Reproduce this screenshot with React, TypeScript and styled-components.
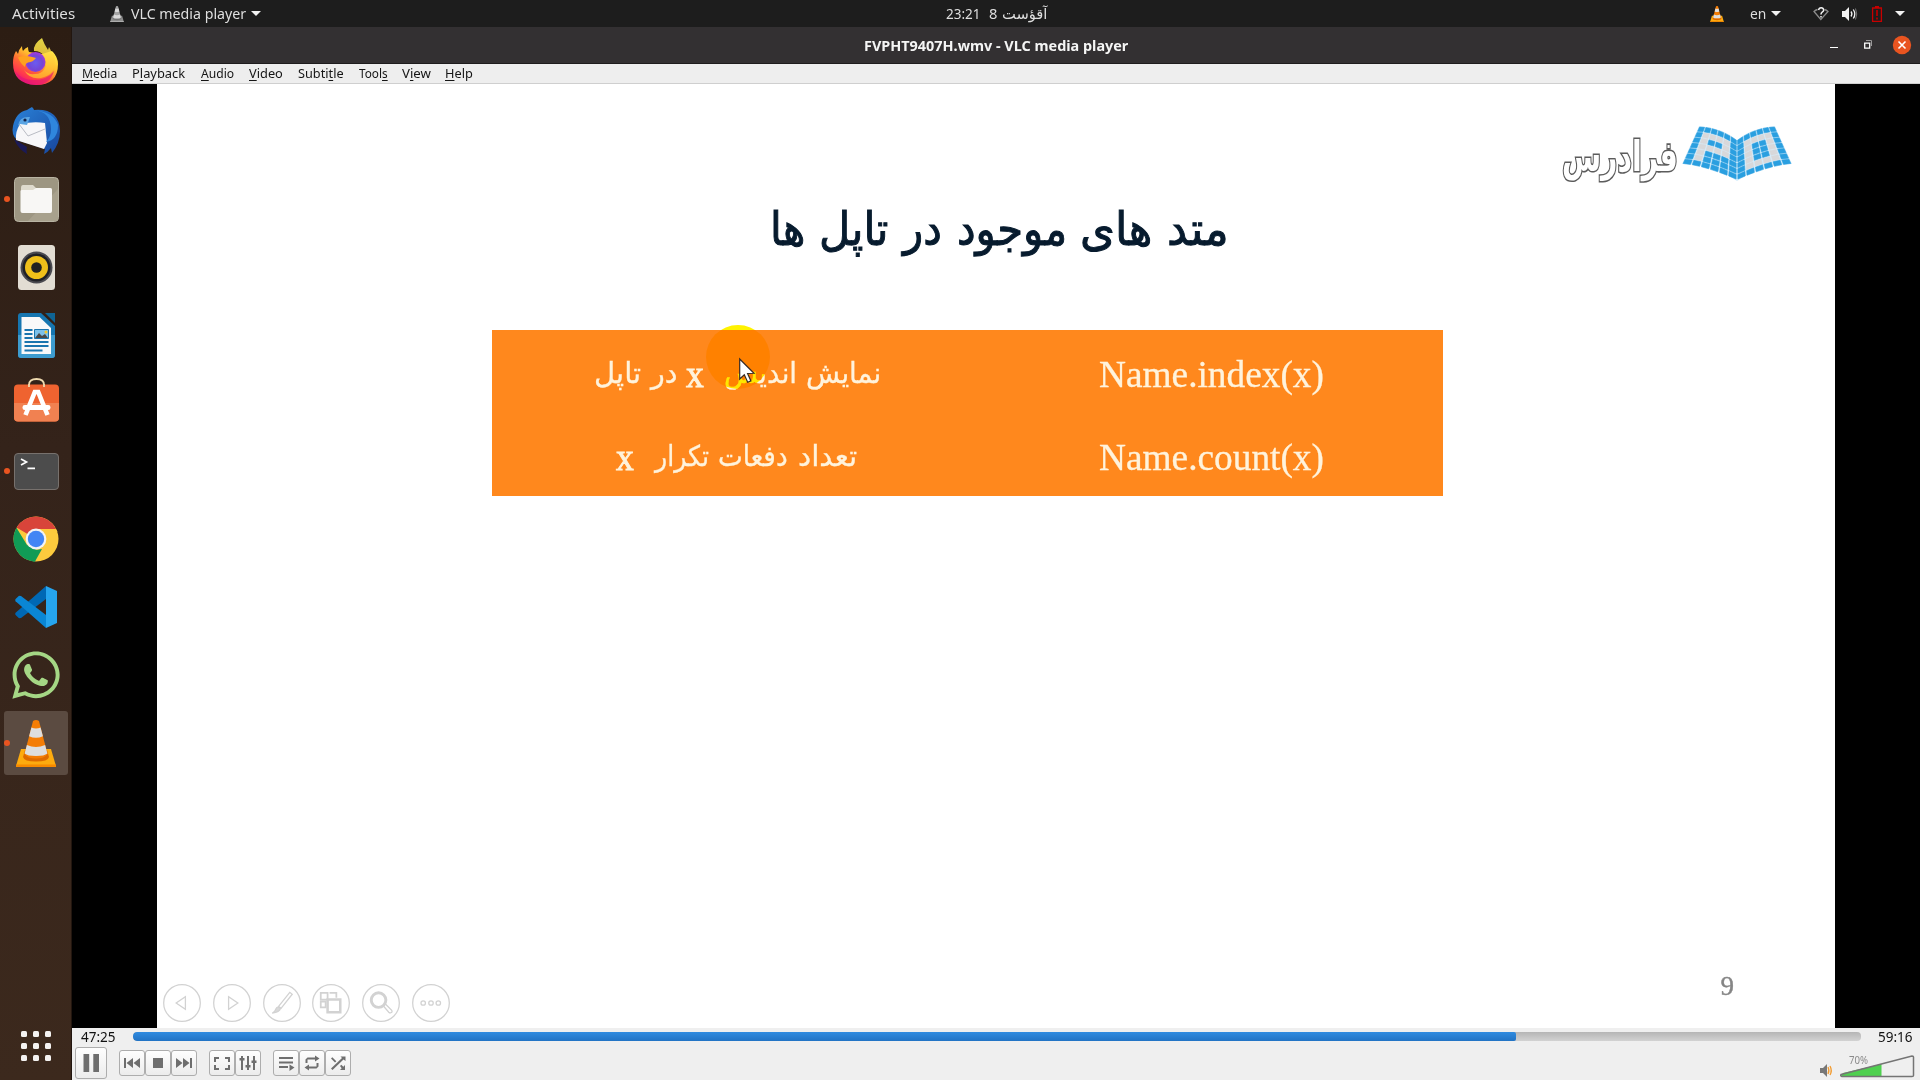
import React, { useLayoutEffect, useRef, useState } from 'react';
import styled, { createGlobalStyle } from 'styled-components';
import { FaWhatsapp } from 'react-icons/fa';

const UI = '"Noto Sans", "Open Sans", "DejaVu Sans", sans-serif';
const SERIF = '"Liberation Serif", "DejaVu Serif", serif';
const ARABIC = '"DejaVu Sans", sans-serif';

const Global = createGlobalStyle`
  html, body { margin: 0; padding: 0; background: #000; overflow: hidden; }
  * { box-sizing: border-box; }
  svg { display: block; flex: none; overflow: visible; }
`;

/* ---------- text that is condensed or widened to a set width ---------- */
const FitBox = styled.span<{ $w: number; $ml: number }>`
  display: block;
  flex: none;
  width: ${p => p.$w}px;
  margin-left: ${p => p.$ml}px;
  white-space: nowrap;
  direction: ltr;
`;
const FitInner = styled.span`
  display: inline-block;
  transform-origin: 0 50%;
`;
function Fit({ w, ml = 0, children }: { w: number; ml?: number; children: React.ReactNode }) {
  const ref = useRef<HTMLSpanElement>(null);
  const [scale, setScale] = useState(1);
  useLayoutEffect(() => {
    if (ref.current && ref.current.offsetWidth) setScale(w / ref.current.offsetWidth);
  }, [w]);
  return (
    <FitBox $w={w} $ml={ml}>
      <FitInner ref={ref} style={{ transform: `scaleX(${scale})` }}>{children}</FitInner>
    </FitBox>
  );
}

/* ---------- shell ---------- */
const Desktop = styled.div`
  width: 1920px;
  height: 1080px;
  display: flex;
  flex-direction: column;
  overflow: hidden;
  font-family: ${UI};
`;
const TopBar = styled.header`
  height: 27px;
  flex: none;
  display: grid;
  grid-template-columns: 1fr auto 1fr;
  align-items: center;
  background: #1d1d1d;
  color: #dfdfdf;
  font-size: 14.7px;
  line-height: 27px;
`;
const BarLeft = styled.div`
  display: flex;
  align-items: center;
  padding-left: 12px;
`;
const Clock = styled.div`
  display: flex;
  align-items: center;
  width: 101px;
  margin-right: -73px;
`;
const BarRight = styled.div`
  display: flex;
  align-items: center;
  justify-content: flex-end;
  padding-right: 15px;
`;
const Caret = styled.i<{ $ml: number }>`
  width: 0;
  height: 0;
  margin-left: ${p => p.$ml}px;
  border: 5px solid transparent;
  border-top-color: #f2f2f2;
  border-bottom: 0;
`;
const Gap = styled.span<{ $w: number }>`
  flex: none;
  width: ${p => p.$w}px;
`;
const Below = styled.div`
  flex: 1;
  display: flex;
  min-height: 0;
`;

/* ---------- dock ---------- */
const Dock = styled.nav`
  width: 72px;
  flex: none;
  display: flex;
  flex-direction: column;
  padding: 4px 4px 15px;
  gap: 4px;
  background: linear-gradient(#2c1d13, #34231a 40%, #3c291d);
  border-right: 1px solid #22160f;
`;
const Slot = styled.div<{ $active?: boolean; $lift?: number }>`
  height: 64px;
  flex: none;
  display: grid;
  place-items: center;
  position: relative;
  padding-bottom: ${p => p.$lift ?? 0}px;
  border-radius: 3px;
  margin-right: -1px;
  background: ${p => (p.$active ? '#5b4b41' : 'transparent')};
`;
const RunDot = styled.i`
  position: absolute;
  left: 0;
  top: 29px;
  width: 6px;
  height: 6px;
  border-radius: 50%;
  background: #e95420;
`;
const AppsGrid = styled.div`
  margin: auto 0 0 17px;
  display: grid;
  grid-template-columns: repeat(3, 6px);
  grid-auto-rows: 6px;
  gap: 6px;
  padding-bottom: 4px;
`;
const AppsCell = styled.i`
  background: #f4f2f1;
  border-radius: 1.5px;
`;

/* ---------- window ---------- */
const Win = styled.main`
  flex: 1;
  display: flex;
  flex-direction: column;
  min-width: 0;
`;
const TitleBar = styled.div`
  height: 37px;
  flex: none;
  display: grid;
  grid-template-columns: 1fr auto 1fr;
  align-items: center;
  background: #333032;
  border-bottom: 1px solid #1e1c1d;
  color: #f5f5f5;
  font: bold 14.7px/36px ${UI};
`;
const WinButtons = styled.div`
  display: flex;
  align-items: center;
  justify-content: flex-end;
  padding-right: 9px;
`;
const MenuBar = styled.div`
  height: 20px;
  flex: none;
  display: flex;
  padding-left: 10px;
  background: #eee;
  border-bottom: 1px solid #cfcfcf;
  color: #151515;
  font-size: 13px;
  line-height: 19px;
`;
const U = styled.u`
  text-underline-offset: 2px;
  text-decoration-thickness: 1px;
  text-decoration-skip-ink: none;
`;
const Video = styled.div`
  height: 944px;
  flex: none;
  display: flex;
  background: #000;
  padding: 0 85px;
`;
const Slide = styled.div`
  flex: 1;
  position: relative;
  display: flex;
  flex-direction: column;
  background: #fff;
`;
const LogoRow = styled.div`
  display: flex;
  padding: 42px 43px 0 0;
  justify-content: flex-end;
  height: 108px;
`;
const LogoText = styled.div`
  margin: 5px 4px 0 0;
  font: bold 42px/52px ${ARABIC};
  color: #fff;
  -webkit-text-stroke: 3.2px #5c5c5c;
  paint-order: stroke fill;
`;
const Heading = styled.h1`
  margin: 0 0 0 613px;
  height: 138px;
  display: flex;
  font: normal 46px/74px ${ARABIC};
  color: #071b2e;
  -webkit-text-stroke: 1px #071b2e;
`;
const Table = styled.div`
  width: 951px;
  height: 166px;
  margin-left: 335px;
  display: grid;
  grid-template-rows: 83px 83px;
  background: #ff881d;
  color: #fff3dc;
`;
const Row = styled.div<{ $pad: number }>`
  display: flex;
  align-items: flex-start;
  padding-left: ${p => p.$pad}px;
`;
const Fa = styled.div`
  display: flex;
  font: 28.5px/70px ${ARABIC};
  height: 70px;
  margin-top: 9px;
  -webkit-text-stroke: 0.3px #fff3dc;
`;
const Latin = styled.div<{ $heavy?: boolean }>`
  font: 37.5px/70px ${SERIF};
  margin-top: 10px;
  -webkit-text-stroke: ${p => (p.$heavy ? 0.9 : 0.3)}px #fff3dc;
`;
const PageNo = styled.div`
  margin: auto 101px -20px auto;
  font: 27px/36px ${SERIF};
  color: #858585;
  -webkit-text-stroke: 0.4px #858585;
`;
const Halo = styled.div`
  position: absolute;
  left: 549px;
  top: 241px;
  width: 64px;
  height: 64px;
  border-radius: 50%;
  background: #fff200;
  mix-blend-mode: multiply;
  filter: blur(0.7px);
`;
const Pointer = styled.div`
  position: absolute;
  left: 582px;
  top: 274px;
`;
const SlideTools = styled.div`
  display: flex;
  gap: 11.8px;
  padding: 0 0 6px 6px;
`;

/* ---------- player controls ---------- */
const Controls = styled.footer`
  flex: 1;
  background: #efefef;
  color: #111;
  font-size: 13.5px;
`;
const SeekRow = styled.div`
  height: 18px;
  display: flex;
  align-items: center;
  padding-left: 9px;
  line-height: 18px;
`;
const Seek = styled.div`
  width: 1728px;
  height: 9px;
  margin: -1px 17px 0 17px;
  border-radius: 4px;
  background: linear-gradient(#b5b5b5, #d2d2d2);
  overflow: hidden;
`;
const SeekFill = styled.div`
  height: 100%;
  background: linear-gradient(#2f8be0, #2273c4);
  border-radius: 4px 2px 2px 4px;
`;
const ButtonRow = styled.div`
  display: flex;
  height: 34px;
  align-items: center;
  padding-left: 3px;
`;
const Group = styled.div`
  display: flex;
  margin-left: 12px;
`;
const Btn = styled.button<{ $size?: number }>`
  width: ${p => p.$size ?? 26}px;
  height: ${p => p.$size ?? 26}px;
  padding: 0;
  display: grid;
  place-items: center;
  border: 1px solid #adadad;
  border-radius: 3px;
  background: linear-gradient(#fefefe, #ececec);
`;
const Volume = styled.div`
  margin-left: auto;
  display: flex;
  padding-right: 5px;
`;

/* ---------- drawings ---------- */
const Cone = ({ w, h, gray }: { w: number; h: number; gray?: boolean }) => {
  const o = gray ? '#a4a4a4' : '#f47d05';
  const l = gray ? '#d9d9d9' : '#dedede';
  return (
    <svg width={w} height={h} viewBox="0 0 40 47">
      <path d="M5 29h30l5 17H0z" fill={gray ? '#8d8d8d' : '#fdab0f'} />
      <path d="M0 44.500h40v2.500H0z" fill={gray ? '#b8b8b8' : '#f78a00'} />
      <path d="M9 30L7 37q1 4.500 13 4.500T33 37l-2-7z" fill={gray ? '#777' : '#dd6a00'} />
      <path d="M17 1q3-2 6 0l8.500 33q-3 4.500-11.500 4.500T8.500 34z" fill={o} />
      <path d="M15.400 7.500q4.600 2 9.200 0l2.300 8.700q-6.900 3.300-13.800 0z" fill={l} />
      <path d="M10.900 25q9.100 4 18.200 0l2.300 8.500q-3 2.500-11.400 2.500T8.600 33.500z" fill={l} />
    </svg>
  );
};

const Firefox = () => (
  <svg width="46" height="47" viewBox="0 0 46 47">
    <defs>
      <linearGradient id="ffa" x1=".85" y1=".1" x2=".25" y2=".95">
        <stop offset="0" stopColor="#fff04a" /><stop offset=".35" stopColor="#ffbd2e" />
        <stop offset=".6" stopColor="#ff6a33" /><stop offset=".85" stopColor="#ff3550" /><stop offset="1" stopColor="#e2157c" />
      </linearGradient>
      <radialGradient id="ffb" cx=".5" cy=".55" r=".6">
        <stop offset="0" stopColor="#6a5cf0" /><stop offset=".6" stopColor="#7446d6" /><stop offset="1" stopColor="#b833e1" />
      </radialGradient>
      <linearGradient id="ffc" x1="0" y1="0" x2="0" y2="1">
        <stop offset="0" stopColor="#fff44f" /><stop offset="1" stopColor="#ffb02c" />
      </linearGradient>
    </defs>
    <path d="M9 8q0 3 1 5 2-3 5-4 0 3 1 5l13 2 10-3q6 6 6 13 0 21-22 21Q0 46 0 25q0-7 3-12 1 1 2 3 1-5 4-8z" fill="url(#ffa)" />
    <path d="M2 33q6 9 19 9t20-9q-4 14-18 14T2 33z" fill="#e5127a" opacity=".65" />
    <circle cx="22.500" cy="24" r="10" fill="url(#ffb)" />
    <path d="M29 0q-9 6-8 13 7 0 10 5 4 6 1 12-3 6-10 6-7 1-11-4 6 10 17 8 14-3 14-17 0-5-2-9l-1 2q-1-4-3-7l-1 3Q31 6 29 0z" fill="url(#ffc)" opacity=".85" />
    <path d="M5 19.500q3-2 9-1.500 6 1 9 2-3 4-8 4.500-3 1-3 4.500-5-4-7-9.500z" fill="#ffa21f" />
  </svg>
);

const Thunderbird = () => (
  <svg width="48" height="48" viewBox="0 0 48 48">
    <defs>
      <linearGradient id="tba" x1="0" y1="0" x2="1" y2="1">
        <stop offset="0" stopColor="#2a82d8" /><stop offset="1" stopColor="#17459c" />
      </linearGradient>
    </defs>
    <path d="M20 0q2 2 2 3Q47 1 48 24q0 12-8 22l-1-5q-3 4-7 6l1-5L5 33Q-1 28 1 19 4 5 15 3q3-2 5-3z" fill="url(#tba)" />
    <path d="M2 32q4 10 13 15-1-4 0-7z" fill="#1b1a56" />
    <path d="M8 17q14-3 25-1l2 20-3 6-28-9q-1-8 4-16z" fill="#f7f7f9" />
    <path d="M7 17l9 12 17-7" fill="none" stroke="#b9bcc4" strokeWidth="1" />
    <path d="M6 19Q7 9 18 10l-3 8-7-1z" fill="#5aa5e4" />
    <path d="M22 3q17 2 17 19 0 8-5 13 12-2 12-17Q42 5 22 3z" fill="#2f86dd" />
    <circle cx="13" cy="13" r="1.600" fill="#12234b" />
  </svg>
);

const Files = () => (
  <svg width="45" height="45" viewBox="0 0 45 45">
    <rect x=".5" y=".5" width="44" height="44" rx="4" fill="#9d9682" stroke="#b9b4a3" />
    <path d="M44 12v29q0 3-3 3H14z" fill="#a8a18d" />
    <path d="M7 11q0-3 2-3h10l3 3h14q2 0 2 2v8H7z" fill="#dedacd" />
    <path d="M6.500 14q0-1 1.500-1h11l3-2h14q2 0 2 2v21q0 2-2 2H8.500q-2 0-2-2z" fill="#f8f7f5" />
  </svg>
);

const Rhythmbox = () => (
  <svg width="37" height="45" viewBox="0 0 37 45">
    <rect width="37" height="45" rx="3.500" fill="#e2ddd3" />
    <circle cx="18.500" cy="22.500" r="16" fill="#4a4a50" />
    <circle cx="18.500" cy="22.500" r="14" fill="#202126" />
    <circle cx="18.500" cy="22.500" r="11.500" fill="#efbf1a" />
    <circle cx="18.500" cy="22.500" r="5.300" fill="#222" />
  </svg>
);

const Writer = () => (
  <svg width="37" height="45" viewBox="0 0 37 45">
    <path d="M3 0h20l14 13v29q0 3-3 3H3q-3 0-3-3V3q0-3 3-3z" fill="#1676b0" />
    <path d="M0 22h37v20q0 3-3 3H3q-3 0-3-3z" fill="#3d9ccf" />
    <path d="M3.500 4h18L33 15v26H3.500z" fill="#f9f9f9" />
    <path d="M27 0h10v10z" fill="#0f6494" />
    <path d="M6.500 17h8M6.500 21h8M6.500 25h8M6.500 29h24M6.500 33h24M6.500 37.500h18" stroke="#1a75ae" strokeWidth="2" />
    <path d="M16.500 16.500h14v9h-14z" fill="#7cc1ea" stroke="#1a75ae" />
    <path d="M17 25l4-5 3 3 3-2 3 4z" fill="#484848" />
    <circle cx="28" cy="19" r="1.500" fill="#f5c629" />
  </svg>
);

const Software = () => (
  <svg width="45" height="45" viewBox="0 0 45 45">
    <path d="M15 10V7q0-6 7.500-6T30 7v3" fill="none" stroke="#eed9ae" strokeWidth="1.800" />
    <rect y="6.500" width="45" height="37" rx="4" fill="#ef6330" />
    <path d="M0 25h45v14.500q0 4-4 4H4q-4 0-4-4z" fill="#f18151" />
    <path d="M15 9V6M30 9V6" stroke="#eed9ae" strokeWidth="1.800" />
    <path d="M11.500 37L20.800 14h3.400l9.300 23" fill="none" stroke="#fff" strokeWidth="4.600" />
    <rect x="8.500" y="27" width="28" height="5" rx="2.300" fill="#fff" />
  </svg>
);

const Terminal = () => (
  <svg width="45" height="37" viewBox="0 0 45 37">
    <rect x=".5" y=".5" width="44" height="36" rx="3.500" fill="#4c4c4c" stroke="#77716d" />
    <path d="M7 6l5.500 3L7 12M13.500 15.300H21" fill="none" stroke="#fff" strokeWidth="1.700" />
  </svg>
);

const Chrome = () => (
  <svg width="46" height="46" viewBox="0 0 46 46">
    <circle cx="23" cy="23" r="22.500" fill="#fdca3d" />
    <path d="M23 23L3.500 11.500A22.500 22.500 0 0 1 43 13H23z" fill="#d8443a" />
    <path d="M3.500 11.800L14 29l10 5-2 11.500A22.500 22.500 0 0 1 3.500 11.800z" fill="#109b56" />
    <path d="M23 34l6-1-7 12.500h-2z" fill="#109b56" />
    <path d="M23 13h20a22 22 0 0 1 1.500 3L28 16z" fill="#fdca3d" />
    <circle cx="23" cy="23" r="10.400" fill="#f3f3f3" />
    <circle cx="23" cy="23" r="8.200" fill="#4285f4" />
  </svg>
);

const Code = () => (
  <svg width="42" height="42" viewBox="0 0 42 42">
    <path d="M31 0v13L6 32l-2 .3L.6 29q-1-1 0-2.200z" fill="#0068b4" />
    <path d="M31 42V29L6 10l-2-.3L.6 13q-1 1 0 2.200z" fill="#0a86d4" />
    <path d="M31 0l11 5v32l-11 5z" fill="#26a5ee" />
  </svg>
);

const gridRows = {
  left: ['BBBBBB', 'BGGGGB', 'BGBBGB', 'BGGGGB', 'BGBBBB', 'BGBBBB', 'BBBBBB'],
  right: ['BBBBBB', 'BGGGGB', 'BGBBGB', 'BGBBGB', 'BGBBGB', 'BGGGGB', 'BBBBBB'],
};
function Book() {
  const at = (u: number, v: number, right: boolean): [number, number] => {
    const topX = 17 + 37.5 * u, topY = 0.5 + 13.5 * u * u;
    const botX = 54.5 * u, botY = 38 + 16 * Math.pow(u, 1.5);
    const x = topX + (botX - topX) * v, y = topY + (botY - topY) * v;
    return [right ? 109 - x : x, y];
  };
  const cells: React.ReactNode[] = [];
  (['left', 'right'] as const).forEach(side => {
    const right = side === 'right';
    gridRows[side].forEach((line, r) =>
      line.split('').forEach((c, k) => {
        const col = right ? 5 - k : k;
        const u0 = (col + 0.1) / 6, u1 = (col + 0.9) / 6, v0 = (r + 0.1) / 7, v1 = (r + 0.9) / 7;
        const pts = [at(u0, v0, right), at(u1, v0, right), at(u1, v1, right), at(u0, v1, right)];
        const color = c === 'B' ? '#2a9fe0' : '#d8d8da';
        cells.push(<polygon key={side + r + k} points={pts.map(p => p.join(',')).join(' ')} fill={color} stroke={color} strokeWidth=".6" strokeLinejoin="round" />);
      }),
    );
  });
  return (
    <svg width="110" height="55" viewBox="0 0 109 55" preserveAspectRatio="none">
      <path d="M17 0Q40 2 54.500 14 69 2 92 0L109 38Q80 38 54.500 55 29 38 0 38z" fill="#c4e6f9" opacity=".7" />
      {cells}
    </svg>
  );
}

const toolGlyphs: React.ReactNode[] = [
  <path d="M23 13v13l-9.500-6.500z" />,
  <path d="M16 13v13l9.500-6.500z" />,
  <g><path d="M16 23L27.500 8.500l2.500 2L18.500 25z" /><path d="M16 23.500l2 1.500q-1 4-8.500 5 3-2 3.500-4 1-2.500 3-2.500z" fill="#d9d9d9" /></g>,
  <g strokeWidth="1.800"><path d="M9 9h7v7H9zM18 9h7v5M9 18h5v6H9z" /><path d="M16 16h13v13H16z" strokeWidth="2.600" /></g>,
  <g><circle cx="17" cy="16.500" r="7.500" strokeWidth="3" /><path d="M21.500 22l2-2 7 7q1 2-1 2.500-1 .5-2-.5z" /></g>,
  <g><circle cx="11.500" cy="19.500" r="2.300" /><circle cx="19.500" cy="19.500" r="2.300" /><circle cx="27" cy="19.500" r="2.300" /></g>,
];

const I = ({ children, s = 18 }: { children: React.ReactNode; s?: number }) => (
  <svg width={s} height={s} viewBox="0 0 18 18" fill="#6e6e6e">{children}</svg>
);

const dock: { icon: React.ReactNode; run?: boolean; active?: boolean; lift?: number }[] = [
  { icon: <Firefox />, lift: 3 },
  { icon: <Thunderbird /> },
  { icon: <Files />, run: true },
  { icon: <Rhythmbox /> },
  { icon: <Writer /> },
  { icon: <Software />, lift: 5 },
  { icon: <Terminal />, run: true },
  { icon: <Chrome /> },
  { icon: <Code /> },
  { icon: <FaWhatsapp size={54} color="#a5d785" /> },
  { icon: <Cone w={40} h={47} />, run: true, active: true },
];

const menus: [number, number, React.ReactNode][] = [
  [35.5, 0, <><U>M</U>edia</>],
  [53.5, 14.5, <>P<U>l</U>ayback</>],
  [33.5, 15, <><U>A</U>udio</>],
  [33.5, 15, <><U>V</U>ideo</>],
  [46, 15, <>Subti<U>t</U>le</>],
  [29, 15, <>Tool<U>s</U></>],
  [28.5, 14.5, <>V<U>i</U>ew</>],
  [27.5, 14.5, <><U>H</U>elp</>],
];

export default function App() {
  return (
    <Desktop>
      <Global />
      <TopBar>
        <BarLeft>
          <Fit w={63}>Activities</Fit>
          <Gap $w={35} />
          <Cone w={14} h={16} gray />
          <Fit w={115} ml={7}>VLC media player</Fit>
          <Caret $ml={5} />
        </BarLeft>
        <Clock>
          <Fit w={35}>23:21</Fit>
          <Fit w={8} ml={8}>8</Fit>
          <Fit w={45} ml={5}>آقؤست</Fit>
        </Clock>
        <BarRight>
          <Cone w={14} h={16} />
          <Fit w={16} ml={26}>en</Fit>
          <Caret $ml={5} />
          <Gap $w={32} />
          <svg width="16" height="14" viewBox="0 0 16 14">
            <path d="M4.500 2.500Q2.500 3 1 4.500l6.800 8L15 4.500Q13.500 3 11.500 2.500" fill="none" stroke="#8c8c8c" strokeWidth="1.300" />
            <path d="M5.500 3q.5-2.300 2.700-2.300T10.700 3q0 1.300-1.500 2.200Q8 6 8 7.500M8 9v1.600" fill="none" stroke="#f2f2f2" strokeWidth="1.500" />
          </svg>
          <Gap $w={13} />
          <svg width="16" height="14" viewBox="0 0 16 14">
            <path d="M0 4h3l4-4v14l-4-4H0z" fill="#f2f2f2" />
            <path d="M9 4.500q1.800 2.500 0 5M11.300 2.500q3 4.500 0 9" fill="none" stroke="#f2f2f2" strokeWidth="1.300" />
            <path d="M13.500 1.500q2.500 5.500 0 11" fill="none" stroke="#777" />
          </svg>
          <Gap $w={14} />
          <svg width="10" height="16" viewBox="0 0 10 16">
            <path d="M.6 2h8.800v13.300H.6zM3 .6h4" fill="none" stroke="#c80000" strokeWidth="1.300" />
            <path d="M5 4v6M5 11.500v2" stroke="#a40000" strokeWidth="2" />
          </svg>
          <Caret $ml={13} />
        </BarRight>
      </TopBar>

      <Below>
        <Dock>
          {dock.map((d, i) => (
            <Slot key={i} $active={d.active} $lift={d.lift}>
              {d.run && <RunDot />}
              {d.icon}
            </Slot>
          ))}
          <AppsGrid>{Array.from({ length: 9 }, (_, i) => <AppsCell key={i} />)}</AppsGrid>
        </Dock>

        <Win>
          <TitleBar>
            <span />
            <Fit w={264}>FVPHT9407H.wmv - VLC media player</Fit>
            <WinButtons>
              <svg width="81" height="18" viewBox="0 0 81 18">
                <path d="M0 11.500h8" stroke="#fff" />
                <path d="M34.700 7.200h5v5h-5z" fill="none" stroke="#fff" strokeWidth="1.300" />
                <path d="M36 4.500h5.500V10" fill="none" stroke="#9a9899" />
                <circle cx="72" cy="9" r="9.200" fill="#e95420" />
                <path d="M68.500 5.500l7 7M75.500 5.500l-7 7" stroke="#fff" strokeWidth="1.600" />
              </svg>
            </WinButtons>
          </TitleBar>
          <MenuBar>
            {menus.map(([w, ml, label], i) => <Fit key={i} w={w} ml={ml}>{label}</Fit>)}
          </MenuBar>

          <Video>
            <Slide>
              <LogoRow>
                <LogoText><Fit w={116}>فرادرس</Fit></LogoText>
                <Book />
              </LogoRow>
              <Heading>
                <Fit w={35}>ها</Fit>
                <Fit w={69} ml={14}>تاپل</Fit>
                <Fit w={39} ml={15}>در</Fit>
                <Fit w={110} ml={15}>موجود</Fit>
                <Fit w={72} ml={13}>های</Fit>
                <Fit w={62} ml={15}>متد</Fit>
              </Heading>
              <Table>
                <Row $pad={102}>
                  <Fa>
                    <Fit w={47}>تاپل</Fit>
                    <Fit w={26} ml={10}>در</Fit>
                  </Fa>
                  <Latin $heavy><Fit w={18} ml={9}>x</Fit></Latin>
                  <Fa>
                    <Fit w={73} ml={20}>اندیس</Fit>
                    <Fit w={75} ml={9}>نمایش</Fit>
                  </Fa>
                  <Latin><Fit w={225} ml={218}>Name.index(x)</Fit></Latin>
                </Row>
                <Row $pad={124}>
                  <Latin $heavy><Fit w={18}>x</Fit></Latin>
                  <Fa>
                    <Fit w={54} ml={21}>تکرار</Fit>
                    <Fit w={70} ml={9}>دفعات</Fit>
                    <Fit w={59} ml={10}>تعداد</Fit>
                  </Fa>
                  <Latin><Fit w={225} ml={242}>Name.count(x)</Fit></Latin>
                </Row>
              </Table>
              <PageNo>9</PageNo>
              <SlideTools>
                {toolGlyphs.map((g, i) => (
                  <svg key={i} width="38" height="38" viewBox="0 0 39 39" fill="none" stroke="#d2d2d2" strokeWidth="1.300">
                    <circle cx="19.500" cy="19.500" r="18.800" />
                    {g}
                  </svg>
                ))}
              </SlideTools>
              <Halo />
              <Pointer>
                <svg width="17" height="26" viewBox="0 0 17 26">
                  <path d="M.7 1v20l4.600-4.300 3.400 7.600 3.200-1.400-3.300-7.400 6.400-.2z" fill="#fff" stroke="#3a2a22" strokeWidth="1.200" />
                </svg>
              </Pointer>
            </Slide>
          </Video>

          <Controls>
            <SeekRow>
              <Fit w={35}>47:25</Fit>
              <Seek><SeekFill style={{ width: '80.03%' }} /></Seek>
              <Fit w={35}>59:16</Fit>
            </SeekRow>
            <ButtonRow>
              <Btn $size={32}><I><path d="M1.500 0h5.700v18H1.500zM11.300 0H17v18h-5.700z" /></I></Btn>
              <Group>
                <Btn><I><path d="M1 4h2v10H1zM10 4v10L3.500 9zM17 4v10l-6.500-5z" /></I></Btn>
                <Btn><I><path d="M4 4h10v10H4z" /></I></Btn>
                <Btn><I><path d="M15 4h2v10h-2zM8 4v10l6.500-5zM1 4v10l6.500-5z" /></I></Btn>
              </Group>
              <Group>
                <Btn><I><path d="M1 3h5v2H3v3H1zM12 3h5v5h-2V5h-3zM1 11h2v3h3v2H1zM15 11h2v5h-5v-2h3z" /></I></Btn>
                <Btn><I><path d="M2 2h2v14H2zM8 2h2v14H8zM14 2h2v14h-2zM.5 4h5v2.500h-5zM6.500 11h5v2.500h-5zM12.500 6.500h5V9h-5z" /></I></Btn>
              </Group>
              <Group>
                <Btn><I><path d="M2 3h14v2H2zM2 7.500h14v2H2zM2 12h9v2H2zM12.500 10.500l5 3-5 3.500z" /></I></Btn>
                <Btn><I><path d="M4.500 3.500H12V1.500l4.500 3-4.500 3v-2H4.500v3.500H2.500V5.500zM13.500 14.500H6v2l-4.500-3 4.500-3v2h7.500V9h2v3.500z" /></I></Btn>
                <Btn><I><path d="M2 4.500l1.300-1.300 4 4L6 8.500zM11 12l1.300-1.300 2 2L16 11v5h-5l1.700-1.800zM2 14.500L13 4l-1.500-1.500H16.500V7L14.500 5.500 3.500 16z" /></I></Btn>
              </Group>
              <Volume>
                <svg width="96" height="26" viewBox="0 0 96 26">
                  <path d="M1 18h3l4-4v13l-4-4H1z" fill="#777" />
                  <path d="M9 17q1.800 3.500 0 7M11 16q2.500 4.500 0 9" fill="none" stroke="#f39a2d" strokeWidth="1.300" />
                  <path d="M24 23L62.500 14v12H22z" fill="#4fd04f" />
                  <path d="M22 24.500L93 6q1.500 0 1.500 1v18.500q0 1-1.500 1H23q-2-.8-1-2z" fill="none" stroke="#747474" strokeWidth="1.500" />
                  <text x="30" y="14" fontSize="10" fill="#8a8a8a" textLength="19" lengthAdjust="spacingAndGlyphs">70%</text>
                </svg>
              </Volume>
            </ButtonRow>
          </Controls>
        </Win>
      </Below>
    </Desktop>
  );
}
